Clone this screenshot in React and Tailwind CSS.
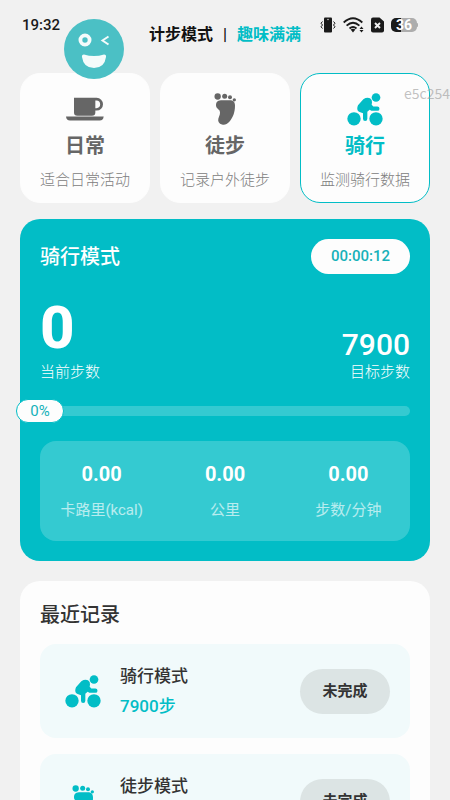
import React, { useState } from "react";

const CupIcon = ({ className }) => (
    <svg viewBox="168 80 114 104" className={className} fill="currentColor" aria-hidden="true">
        <path d="M192 97h68a19 19 0 0 1 0 38h-4v6a10 10 0 0 1-10 10h-44a10 10 0 0 1-10-10zM256 105v23h3a11.500 11.500 0 0 0 0-23z" fillRule="evenodd" />
        <path d="M168 153h113q-1 12-12 12h-89q-11 0-12-12z" />
    </svg>
);

const FootIcon = ({ className }) => (
    <svg viewBox="585 80 114 104" className={className} fill="currentColor" aria-hidden="true">
        <circle cx="620" cy="93" r="9.500" />
        <circle cx="641" cy="92" r="7.500" />
        <circle cx="657" cy="95" r="6" />
        <circle cx="670" cy="103" r="5" />
        <path d="M615 119C615 107 622 104 634 104H656C667 104 672 109 672 120C672 142 665 157 655 169C648 177 640 179 633 177C624 175 620 168 622 160C625 151 629 144 626 136C624 130 615 129 615 119Z" />
    </svg>
);

const BikeIcon = ({ className }) => (
    <svg viewBox="168 80 114 104" className={className} fill="currentColor" aria-hidden="true">
        <circle cx="192" cy="160" r="20" />
        <circle cx="258" cy="160" r="20" />
        <circle cx="258" cy="96" r="13" />
        <path d="M220 101Q230 95 240 98Q247 102 246 111L245 118L250 123H262A6.500 6.500 0 0 1 262 136H244L239 133L232 139V160A6.500 6.500 0 0 1 219 160V143L207 139Q198 132 204 119Z" />
    </svg>
);

const FaceIcon = ({ className }) => (
    <svg viewBox="0 0 60 60" className={className} aria-hidden="true">
        <circle cx="30" cy="30" r="30" fill="#4bc0c5" />
        <circle cx="21" cy="21" r="4.600" fill="none" stroke="#f4fbfb" strokeWidth="3.800" />
        <path d="M44.500 17.500L38.500 21.500L44.500 25.500" fill="none" stroke="#f4fbfb" strokeWidth="2" />
        <path d="M20 35.500Q30 38.500 40 35.500Q42.500 35.500 42 38Q40.500 49 30 49Q19.500 49 18 38Q17.500 35.500 20 35.500Z" fill="#f4fbfb" />
    </svg>
);

const VibrateIcon = () => (
    <svg viewBox="0 0 16 16" className="h-4 w-4" fill="none" stroke="#1a1a1a" strokeWidth="1" aria-hidden="true">
        <rect x="4" y="0.500" width="8" height="15" rx="1" fill="#1a1a1a" stroke="none" />
        <circle cx="8" cy="2.500" r="0.700" fill="#f1f1f1" stroke="none" />
        <path d="M2.500 4.500L1 6.200L2.500 8L1 9.800L2.500 11.500M13.500 4.500L15 6.200L13.500 8L15 9.800L13.500 11.500" />
    </svg>
);

const WifiIcon = () => (
    <svg viewBox="0 0 21 16" className="h-4 w-[21px]" fill="none" stroke="#1a1a1a" strokeWidth="1.800" aria-hidden="true">
        <path d="M0.700 5.500Q10 -3 19.300 5.500M3.600 8.600Q10 2.800 16.400 8.600M6.500 11.500Q10 8.600 13.500 11.500" />
        <path d="M7.600 12.600Q10 10.800 12.400 12.600L10 15.500Z" fill="#1a1a1a" stroke="none" />
        <path d="M16.500 12L18.500 9.500L20.500 12ZM16.500 13H20.500L18.500 15.500Z" fill="#1a1a1a" stroke="none" />
    </svg>
);

const SimIcon = () => (
    <svg viewBox="0 0 13 16" className="h-4 w-[13px]" aria-hidden="true">
        <path d="M2 0.500H8.500L13 4.500V13.500Q13 15.500 11 15.500H2Q0 15.500 0 13.500V2.500Q0 0.500 2 0.500Z" fill="#1a1a1a" />
        <path d="M4 6L9 11M9 6L4 11" stroke="#f1f1f1" strokeWidth="1.900" />
    </svg>
);

const modes = [
    { id: "daily", name: "日常", desc: "适合日常活动", Icon: CupIcon },
    { id: "hike", name: "徒步", desc: "记录户外徒步", Icon: FootIcon },
    { id: "ride", name: "骑行", desc: "监测骑行数据", Icon: BikeIcon },
];

const stats = [
    { label: "卡路里(kcal)", value: "0.00" },
    { label: "公里", value: "0.00" },
    { label: "步数/分钟", value: "0.00" },
];

const records = [
    { id: 1, name: "骑行模式", steps: "7900步", status: "未完成", Icon: BikeIcon },
    { id: 2, name: "徒步模式", steps: "7900步", status: "未完成", Icon: FootIcon },
];

const Header = () => (
    <header className="relative grid h-[73px] grid-cols-[1fr_auto_1fr] items-start">
        <span className="pl-[22px] pt-[15px] text-[15px] leading-5 font-medium text-[#1a1a1a]">19:32</span>
        <h1 className="flex gap-2 pt-[25px] text-base leading-5 font-bold text-[#111111]">
            <span>计步模式</span>
            <span className="w-2 text-center font-medium">|</span>
            <span className="text-[#02bdc6]">趣味满满</span>
        </h1>
        <div className="flex items-center justify-end gap-[7px] pt-[17px] pr-8">
            <VibrateIcon />
            <WifiIcon />
            <SimIcon />
            <div className="flex items-center">
                <span className="flex h-[14px] w-[26px] items-center justify-center rounded-[5px] bg-linear-to-r from-[#1a1a1a] from-40% to-[#adadad] to-40% text-sm leading-[14px] font-bold text-white">36</span>
                <span className="h-1 w-px rounded-r bg-[#adadad]" />
            </div>
        </div>
        <FaceIcon className="absolute top-[19px] left-16 z-10 h-[60px] w-[60px]" />
    </header>
);

const App = () => {
    const [mode, setMode] = useState("ride");
    const percent = 0;

    return (
        <div className="relative h-screen overflow-hidden bg-[#f1f1f1] font-[Roboto,'Noto_Sans_CJK_SC',sans-serif]">
            <Header />

            <main className="px-5">
                <div className="grid grid-cols-3 gap-[10px]">
                    {modes.map(({ id, name, desc, Icon }) => (
                        <button
                            key={id}
                            type="button"
                            onClick={() => setMode(id)}
                            className={`flex flex-col items-center rounded-[20px] border bg-[#fdfdfd] pt-[18px] pb-3 ${mode === id ? "border-[#02bdc6] text-[#02bdc6]" : "border-[#fdfdfd] text-[#666666]"}`}
                        >
                            <Icon className="h-[35px] w-[38px]" />
                            <span className="mt-1 text-xl leading-[30px] font-bold">{name}</span>
                            <span className="mt-[9px] text-[15px] leading-5 font-light text-[#808080]">{desc}</span>
                        </button>
                    ))}
                </div>

                <section className="mt-4 rounded-[20px] bg-[#02bdc6] p-5 text-white">
                    <div className="flex items-center justify-between">
                        <h2 className="text-xl font-medium">骑行模式</h2>
                        <span className="rounded-full bg-[#fdfdfd] px-5 text-[15px] leading-[35px] font-medium text-[#16b1b9]">00:00:12</span>
                    </div>

                    <div className="mt-6 flex items-end justify-between">
                        <div className="flex flex-col gap-1">
                            <span className="text-[60px] leading-[60px] font-extrabold">0</span>
                            <span className="text-[15px] leading-5 font-light">当前步数</span>
                        </div>
                        <div className="flex flex-col items-end gap-1">
                            <span className="text-[30px] leading-[26px] font-medium">7900</span>
                            <span className="text-[15px] leading-5 font-light">目标步数</span>
                        </div>
                    </div>

                    <div className="relative mt-6 h-[10px] rounded-full bg-white/20">
                        <span
                            className="absolute top-1/2 w-12 -translate-x-1/2 -translate-y-1/2 rounded-full border border-[#02bdc6] bg-[#fdfdfd] text-center text-[15px] leading-[22px] text-[#16b1b9]"
                            style={{ left: `${percent}%` }}
                        >
                            {percent}%
                        </span>
                    </div>

                    <div className="mt-[25px] grid grid-cols-3 rounded-2xl bg-white/20 py-5 text-center">
                        {stats.map((item) => (
                            <div key={item.label} className="flex flex-col">
                                <span className="text-xl leading-[26px] font-bold">{item.value}</span>
                                <span className="mt-3 text-[15px] leading-[22px] text-white/65">{item.label}</span>
                            </div>
                        ))}
                    </div>
                </section>

                <section className="mt-5 rounded-[20px] bg-[#fdfdfd] p-5">
                    <h2 className="text-xl leading-7 font-medium text-[#333333]">最近记录</h2>
                    <ul className="mt-[15px] flex flex-col gap-4">
                        {records.map(({ id, name, steps, status, Icon }) => (
                            <li key={id} className="flex items-center rounded-2xl bg-[#f1fafb] px-5 py-[17px]">
                                <span className="flex w-[45px] justify-center text-[#02bdc6]">
                                    <Icon className="h-[35px] w-[38px]" />
                                </span>
                                <div className="ml-[15px] flex flex-1 flex-col text-[17px] leading-[30px] font-medium">
                                    <span className="text-[#333333]">{name}</span>
                                    <span className="text-[#02bdc6]">{steps}</span>
                                </div>
                                <button type="button" className="w-[90px] rounded-full bg-[#dce4e4] text-[15px] leading-[45px] font-bold text-[#333333]">
                                    {status}
                                </button>
                            </li>
                        ))}
                    </ul>
                </section>
            </main>

            <span className="pointer-events-none absolute top-[83px] right-0 font-['Noto_Sans_CJK_SC',sans-serif] text-sm leading-5 text-[#999999]/60">e5c254</span>
        </div>
    );
};

export default App;
